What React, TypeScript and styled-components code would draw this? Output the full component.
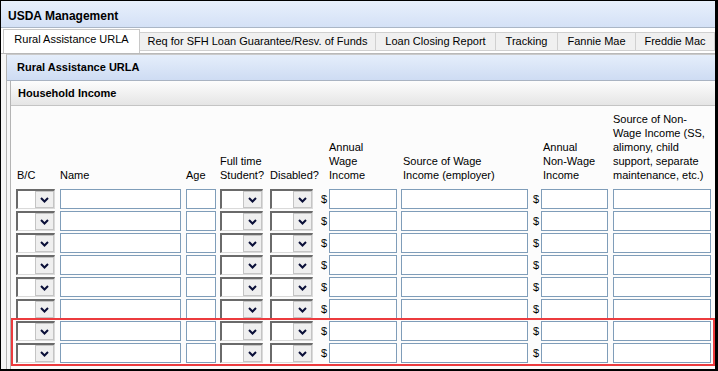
import styled, { createGlobalStyle } from 'styled-components'

const GlobalStyle = createGlobalStyle`
  body {
    margin: 0;
    font-family: 'Liberation Sans', Arial, sans-serif;
    font-size: 11px;
    color: #000;
  }
`

// column widths of the income table, left to right
const COLS = '44px 126px 34px 50px 49px 10px 72px 130px 10px 72px 98px'

const Frame = styled.div`
  width: 718px;
  height: 371px;
  box-sizing: border-box;
  border: 1px solid #000;
  border-right-width: 3px;
  border-bottom-width: 2px;
  background: #f6f6f6;
  display: flex;
  flex-direction: column;
  overflow: hidden;
`

const TitleBar = styled.div`
  height: 18px;
  padding: 8px 0 0 7px;
  border-bottom: 1px solid #aab6c6;
  background: linear-gradient(#e8f0fc, #d4e1f6);
  font-size: 12px;
  font-weight: bold;
  line-height: 14px;
`

const TabStrip = styled.div`
  height: 25px;
  padding-left: 2px;
  display: flex;
  align-items: flex-start;
  background: #fff;
  border-bottom: 1px solid #b9b9b9;
`

const Tab = styled.div<{ $active?: boolean; $w: number }>`
  box-sizing: border-box;
  width: ${(p) => p.$w}px;
  text-align: center;
  line-height: 14px;
  white-space: nowrap;
  ${(p) =>
    p.$active
      ? `
    margin-top: 1px;
    height: 24px;
    padding-top: 2px;
    background: #fff;
    border: 1px solid #c8c8c8;
    border-bottom: none;
  `
      : `
    margin-top: 4px;
    height: 19px;
    padding-top: 1px;
    background: #f0f0f0;
    border: 1px solid #d0d0d0;
    border-left: none;
  `}
`

const Panel = styled.div`
  flex: 1;
  margin-left: 5px;
  border-left: 1px solid #b4b4b4;
  border-top: 1px solid #cacaca;
  background: #f8f8f8;
  display: flex;
  flex-direction: column;
`

const SectionHeader = styled.div`
  height: 20px;
  padding: 5px 0 0 10px;
  border-bottom: 1px solid #a9b3c2;
  background: linear-gradient(#e5eefb, #cedcf3);
  font-weight: bold;
  line-height: 14px;
`

const Household = styled.div`
  flex: 1;
  margin-left: 3px;
  border-left: 1px solid #b4b4b4;
  display: flex;
  flex-direction: column;
`

const HouseholdHeader = styled.div`
  height: 19px;
  padding: 5px 0 0 7px;
  border-bottom: 1px solid #c4c4c4;
  background: linear-gradient(#fdfdfd, #e5e5e5);
  font-weight: bold;
  line-height: 14px;
`

const TableBody = styled.div`
  flex: 1;
  padding: 6px 3px 0 5px;
  background: #fcfcfc;
`

const HeaderRow = styled.div`
  display: grid;
  grid-template-columns: ${COLS};
  align-items: end;
  height: 70px;
`

const Label = styled.div<{ $col: number; $indent?: number }>`
  grid-column: ${(p) => p.$col};
  padding-left: ${(p) => p.$indent ?? 0}px;
  line-height: 14px;
  white-space: nowrap;
`

const Rows = styled.div`
  margin-top: 7px;
  display: flex;
  flex-direction: column;
  gap: 2px;
`

const Highlight = styled.div`
  display: flex;
  flex-direction: column;
  gap: 2px;
  margin-left: -2px;
  padding-left: 2px;
  outline: 2px solid #ec3b3e;
  outline-offset: 1px;
`

const Row = styled.div`
  display: grid;
  grid-template-columns: ${COLS};
  height: 20px;
`

const Field = styled.input<{ $w: number }>`
  box-sizing: border-box;
  width: ${(p) => p.$w}px;
  height: 20px;
  margin: 0;
  padding: 0 2px;
  border: 1px solid #7f9db9;
  background: #fff;
  font: inherit;
`

const Dollar = styled.div`
  display: flex;
  align-items: center;
  justify-content: center;
  line-height: 14px;
`

const Select = styled.div<{ $w: number }>`
  box-sizing: border-box;
  width: ${(p) => p.$w}px;
  height: 20px;
  display: flex;
  justify-content: flex-end;
  border-top: 2px solid #6a6a6a;
  border-left: 2px solid #6a6a6a;
  border-right: 1px solid #dadada;
  border-bottom: 1px solid #dadada;
  background: #fff;
`

const SelectButton = styled.div`
  box-sizing: border-box;
  width: 19px;
  height: 100%;
  display: flex;
  align-items: center;
  justify-content: center;
  background: #efefef;
  border: 1px solid #c4c4c4;
`

const Chevron = () => (
  <svg width="9" height="6" viewBox="0 0 9 6">
    <path d="M1 1 L4.5 4.5 L8 1" fill="none" stroke="#0a0f38" strokeWidth="2" />
  </svg>
)

const Dropdown = ({ w }: { w: number }) => (
  <Select $w={w}>
    <SelectButton>
      <Chevron />
    </SelectButton>
  </Select>
)

const IncomeRow = () => (
  <Row>
    <Dropdown w={39} />
    <Field $w={121} />
    <Field $w={30} />
    <Dropdown w={43} />
    <Dropdown w={43} />
    <Dollar>$</Dollar>
    <Field $w={68} />
    <Field $w={127} />
    <Dollar>$</Dollar>
    <Field $w={67} />
    <Field $w={98} />
  </Row>
)

const tabs = [
  { label: 'Rural Assistance URLA', w: 137, active: true },
  { label: 'Req for SFH Loan Guarantee/Resv. of Funds', w: 236 },
  { label: 'Loan Closing Report', w: 120 },
  { label: 'Tracking', w: 62 },
  { label: 'Fannie Mae', w: 78 },
  { label: 'Freddie Mac', w: 79 },
]

const App = () => {
  return (
    <>
      <GlobalStyle />
      <Frame>
        <TitleBar>USDA Management</TitleBar>
        <TabStrip>
          {tabs.map((t) => (
            <Tab key={t.label} $w={t.w} $active={t.active}>
              {t.label}
            </Tab>
          ))}
        </TabStrip>
        <Panel>
          <SectionHeader>Rural Assistance URLA</SectionHeader>
          <Household>
            <HouseholdHeader>Household Income</HouseholdHeader>
            <TableBody>
              <HeaderRow>
                <Label $col={1} $indent={1}>B/C</Label>
                <Label $col={2}>Name</Label>
                <Label $col={3}>Age</Label>
                <Label $col={4}>
                  Full time
                  <br />
                  Student?
                </Label>
                <Label $col={5}>Disabled?</Label>
                <Label $col={7}>
                  Annual
                  <br />
                  Wage
                  <br />
                  Income
                </Label>
                <Label $col={8} $indent={2}>
                  Source of Wage
                  <br />
                  Income (employer)
                </Label>
                <Label $col={10} $indent={2}>
                  Annual
                  <br />
                  Non-Wage
                  <br />
                  Income
                </Label>
                <Label $col={11}>
                  Source of Non-
                  <br />
                  Wage Income (SS,
                  <br />
                  alimony, child
                  <br />
                  support, separate
                  <br />
                  maintenance, etc.)
                </Label>
              </HeaderRow>
              <Rows>
                {[0, 1, 2, 3, 4, 5].map((i) => (
                  <IncomeRow key={i} />
                ))}
                <Highlight>
                  <IncomeRow />
                  <IncomeRow />
                </Highlight>
              </Rows>
            </TableBody>
          </Household>
        </Panel>
      </Frame>
    </>
  )
}

export default App
